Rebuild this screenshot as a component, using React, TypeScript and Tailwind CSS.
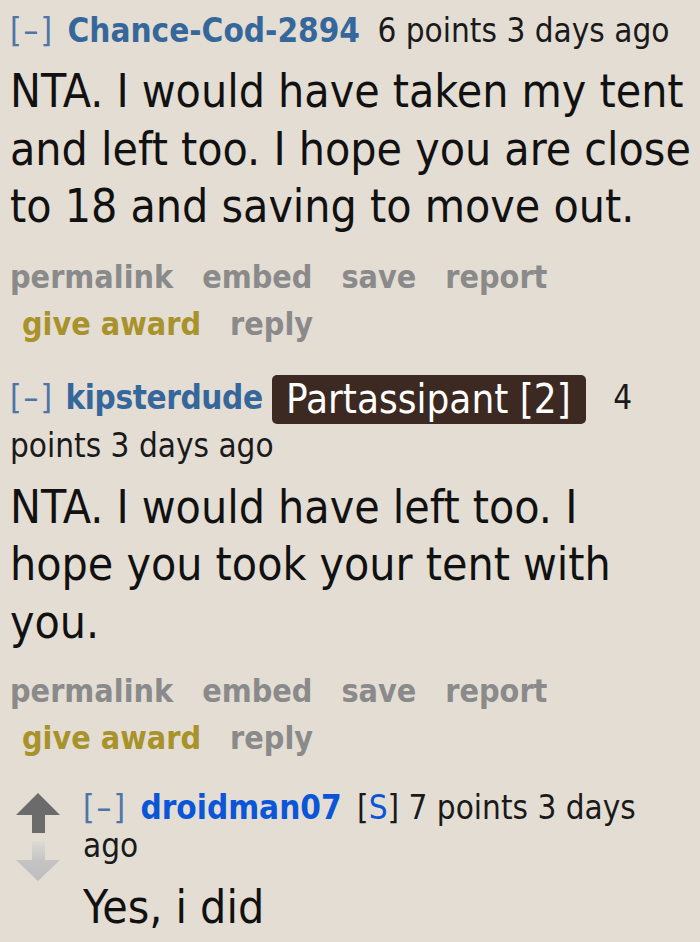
import React from 'react';

const font = "font-['DejaVu_Sans_Condensed','DejaVu_Sans',sans-serif]";

function UpArrow() {
  return (
    <svg width="44" height="40" viewBox="0 0 44 40">
      <polygon points="22,0 44,22 29,22 29,40 16,40 16,22 0,22" fill="#6b6b6b" />
    </svg>
  );
}

function DownArrow() {
  return (
    <svg width="44" height="40" viewBox="0 0 44 40">
      <defs>
        <linearGradient id="dn" x1="0" y1="0" x2="0" y2="1">
          <stop offset="0" stopColor="#dedad4" />
          <stop offset="0.5" stopColor="#c4c4c4" />
          <stop offset="1" stopColor="#bdbdbd" />
        </linearGradient>
      </defs>
      <polygon points="16,0 29,0 29,19 44,19 22,40 0,19 16,19" fill="url(#dn)" />
    </svg>
  );
}

function Buttons() {
  return (
    <div className="text-[32px] font-bold text-[#8a8a8a] leading-[47px]">
      <div className="flex gap-[29px]">
        <span>permalink</span>
        <span>embed</span>
        <span>save</span>
        <span>report</span>
      </div>
      <div className="flex gap-[29px] pl-[12px]">
        <span className="text-[#a8922a]">give award</span>
        <span>reply</span>
      </div>
    </div>
  );
}

export default function App() {
  return (
    <div className={`min-h-screen w-[700px] bg-[#e3ddd3] pl-[10px] text-[#111] ${font}`}>
      {/* comment 1 */}
      <div className="pt-[11px] text-[33px] leading-[40px] whitespace-nowrap">
        <span className="mr-[4px] tracking-[2px] text-[#4d75a6]">[–]</span>{' '}
        <span className="font-bold text-[#36679b]">Chance-Cod-2894</span>{' '}
        <span className="ml-[8px] text-[#1a1a1a]">6 points 3 days ago</span>
      </div>
      <p className="mt-[12px] text-[46px] leading-[57.5px]">
        NTA. I would have taken my tent<br />
        and left too. I hope you are close<br />
        to 18 and saving to move out.
      </p>
      <div className="mt-[18px]">
        <Buttons />
      </div>

      {/* comment 2 */}
      <div className="mt-[27px] text-[33px] leading-[44px] text-[#1a1a1a] whitespace-nowrap">
        <span className="mr-[2px] tracking-[2px] text-[#4d75a6]">[–]</span>{' '}
        <span className="font-bold text-[#36679b] tracking-[-0.4px]">kipsterdude</span>{' '}
        <span className="inline-block rounded-[5px] bg-[#3c2a22] pl-[14px] pr-[15px] leading-[49px] text-[40px] text-white align-middle">
          Partassipant [2]
        </span>{' '}
        <span className="ml-[18px]">4</span>
        <br />
        points 3 days ago
      </div>
      <p className="mt-[11px] text-[46px] leading-[57.5px]">
        NTA. I would have left too. I<br />
        hope you took your tent with<br />
        you.
      </p>
      <div className="mt-[17px]">
        <Buttons />
      </div>

      {/* comment 3 (child) */}
      <div className="mt-[27px] flex pl-[6px]">
        <div className="flex w-[67px] flex-col gap-[8px] pt-[4px]">
          <UpArrow />
          <DownArrow />
        </div>
        <div>
          <div className="text-[33px] leading-[38px] text-[#1a1a1a] whitespace-nowrap">
            <span className="mr-[4px] tracking-[2px] text-[#4d75a6]">[–]</span>{' '}
            <span className="font-bold text-[#0a55d8]">droidman07</span>{' '}
            <span className="ml-[6px]">
              [<span className="text-[#0a55d8]">S</span>]
            </span>{' '}
            7 points 3 days<br />ago
          </div>
          <p className="mt-[14px] text-[46px] leading-[57.5px]">Yes, i did</p>
        </div>
      </div>
    </div>
  );
}
